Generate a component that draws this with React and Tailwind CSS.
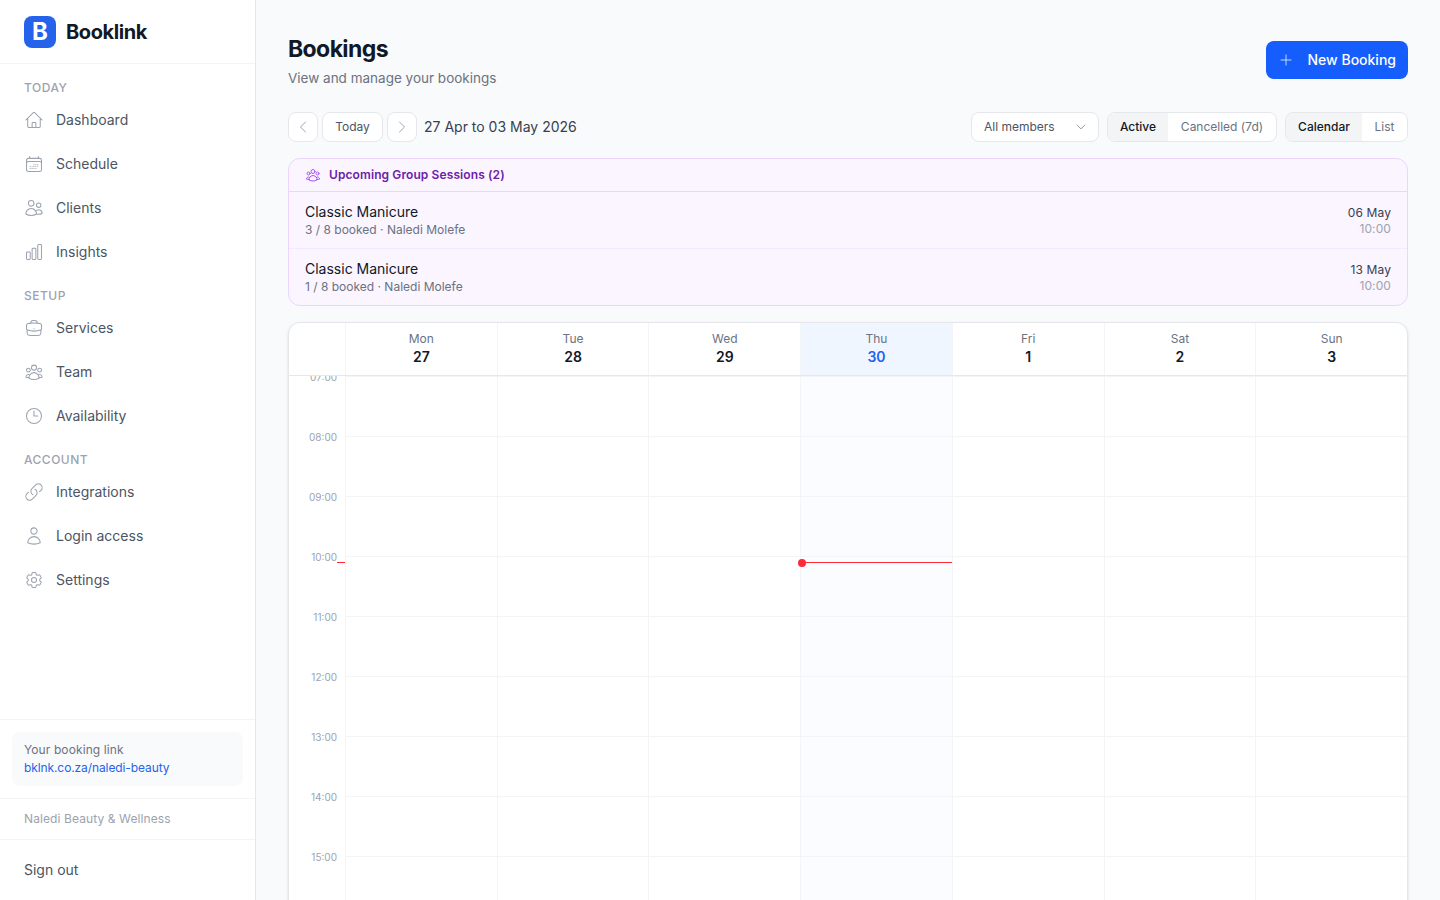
import React from 'react'
import {
  HiOutlineHome, HiOutlineCalendarDays, HiOutlineUsers, HiOutlineChartBar,
  HiOutlineBriefcase, HiOutlineUserGroup, HiOutlineClock, HiOutlineLink,
  HiOutlineUser, HiOutlineCog6Tooth, HiOutlineChevronLeft, HiOutlineChevronRight,
  HiOutlineChevronDown, HiOutlinePlus,
} from 'react-icons/hi2'

const NAV = [
  {
    title: 'Today',
    items: [
      { icon: HiOutlineHome, label: 'Dashboard' },
      { icon: HiOutlineCalendarDays, label: 'Schedule' },
      { icon: HiOutlineUsers, label: 'Clients' },
      { icon: HiOutlineChartBar, label: 'Insights' },
    ],
  },
  {
    title: 'Setup',
    items: [
      { icon: HiOutlineBriefcase, label: 'Services' },
      { icon: HiOutlineUserGroup, label: 'Team' },
      { icon: HiOutlineClock, label: 'Availability' },
    ],
  },
  {
    title: 'Account',
    items: [
      { icon: HiOutlineLink, label: 'Integrations' },
      { icon: HiOutlineUser, label: 'Login access' },
      { icon: HiOutlineCog6Tooth, label: 'Settings' },
    ],
  },
]

const SESSIONS = [
  { name: 'Classic Manicure', meta: '3 / 8 booked · Naledi Molefe', date: '06 May', time: '10:00' },
  { name: 'Classic Manicure', meta: '1 / 8 booked · Naledi Molefe', date: '13 May', time: '10:00' },
]

const DAYS = [
  { name: 'Mon', num: '27' },
  { name: 'Tue', num: '28' },
  { name: 'Wed', num: '29' },
  { name: 'Thu', num: '30', today: true },
  { name: 'Fri', num: '1' },
  { name: 'Sat', num: '2' },
  { name: 'Sun', num: '3' },
]

const HOURS = ['07:00', '08:00', '09:00', '10:00', '11:00', '12:00', '13:00', '14:00', '15:00', '16:00']

function Sidebar() {
  return (
    <aside className="flex h-full w-64 shrink-0 flex-col border-r border-[#e5e7eb] bg-white">
      {/* Logo */}
      <div className="flex h-16 shrink-0 items-center gap-2.5 border-b border-[#f3f4f6] px-6">
        <div className="flex h-8 w-8 items-center justify-center rounded-lg bg-[#2563eb] text-2xl font-bold leading-none text-white">
          B
        </div>
        <span className="text-xl font-bold tracking-[-0.4px] text-[#111827]">Booklink</span>
      </div>

      {/* Nav */}
      <nav className="flex-1 pt-4">
        {NAV.map(section => (
          <div key={section.title} className="mb-3.5">
            <p className="mb-0.5 h-4 px-6 text-xs font-medium uppercase leading-4 tracking-[0.5px] text-[#9ca3af]">
              {section.title}
            </p>
            {section.items.map(({ icon: Icon, label }) => (
              <div key={label} className="flex h-11 items-center gap-3 px-6 text-sm text-[#4b5563]">
                <Icon size={20} strokeWidth={1.25} className="shrink-0 text-[#9ca3af]" />
                <span>{label}</span>
              </div>
            ))}
          </div>
        ))}
      </nav>

      {/* Bottom */}
      <div className="border-t border-[#f3f4f6] p-3">
        <div className="h-[54px] rounded-lg bg-[#f9fafb] px-3 pt-[9px]">
          <p className="text-xs leading-[18px] tracking-[0.1px] text-[#6b7280]">Your booking link</p>
          <p className="text-xs leading-[18px] tracking-[-0.1px] text-[#2563eb]">bklnk.co.za/naledi-beauty</p>
        </div>
      </div>
      <div className="flex h-[41px] items-center border-t border-[#f3f4f6] px-6 text-xs tracking-[0.1px] text-[#9ca3af]">
        Naledi Beauty &amp; Wellness
      </div>
      <div className="flex h-[61px] items-center border-t border-[#f3f4f6] px-6 text-sm text-[#4b5563]">
        Sign out
      </div>
    </aside>
  )
}

function Toolbar() {
  return (
    <div className="mt-6 flex h-[30px] shrink-0 items-center justify-between">
      <div className="flex items-center gap-1">
        <button className="flex h-[30px] w-[30px] items-center justify-center rounded-lg border border-[#e5e7eb] bg-white text-[#9ca3af]">
          <HiOutlineChevronLeft size={16} />
        </button>
        <button className="flex h-[30px] w-[61px] items-center justify-center rounded-lg border border-[#e5e7eb] bg-white text-xs text-[#4b5563]">
          Today
        </button>
        <button className="flex h-[30px] w-[30px] items-center justify-center rounded-lg border border-[#e5e7eb] bg-white text-[#9ca3af]">
          <HiOutlineChevronRight size={16} />
        </button>
        <span className="ml-[3px] text-sm text-[#374151]">27 Apr to 03 May 2026</span>
      </div>
      <div className="flex items-center gap-2">
        <div className="flex h-[30px] w-32 items-center justify-between rounded-lg border border-[#e5e7eb] bg-white pl-3 pr-[11px] text-xs text-[#4b5563]">
          All members
          <HiOutlineChevronDown size={12} className="text-[#6b7280]" />
        </div>
        <div className="flex h-[30px] overflow-hidden rounded-lg border border-[#e5e7eb] bg-white text-xs">
          <span className="flex w-[60px] items-center justify-center bg-[#f3f4f6] font-medium text-[#111827]">Active</span>
          <span className="flex w-[108px] items-center justify-center text-[#6b7280]">Cancelled (7d)</span>
        </div>
        <div className="flex h-[30px] overflow-hidden rounded-lg border border-[#e5e7eb] bg-white text-xs">
          <span className="flex w-[76px] items-center justify-center bg-[#f3f4f6] font-medium text-[#111827]">Calendar</span>
          <span className="flex w-[45px] items-center justify-center text-[#6b7280]">List</span>
        </div>
      </div>
    </div>
  )
}

function GroupSessions() {
  return (
    <div className="mt-4 shrink-0 overflow-hidden rounded-xl border border-[#e9d5ff] bg-[#faf5ff]">
      <div className="flex h-[33px] items-center gap-2 border-b border-[#e9d5ff] px-4 text-xs font-semibold tracking-[0.1px] text-[#6b21a8]">
        <HiOutlineUserGroup size={16} className="text-[#a855f7]" />
        Upcoming Group Sessions (2)
      </div>
      {SESSIONS.map((s, i) => (
        <div
          key={s.date}
          className={`flex items-center justify-between px-4 pt-0.5 ${i > 0 ? 'h-[57px] border-t border-[#f3e8ff]' : 'h-14'}`}
        >
          <div>
            <p className="text-sm leading-[18px] text-[#111827]">{s.name}</p>
            <p className="text-xs leading-[18px] text-[#6b7280]">{s.meta}</p>
          </div>
          <div className="text-right">
            <p className="text-xs leading-[16px] tracking-[0.1px] text-[#374151]">{s.date}</p>
            <p className="text-xs leading-[16px] tracking-[0.1px] text-[#9ca3af]">{s.time}</p>
          </div>
        </div>
      ))}
    </div>
  )
}

function Calendar() {
  return (
    <div className="mt-4 shrink-0 overflow-hidden rounded-xl border border-[#e5e7eb] bg-white shadow-sm">
      {/* Day header */}
      <div className="grid h-[53px] grid-cols-[56px_repeat(7,1fr)] border-b border-[#e5e7eb]">
        <div />
        {DAYS.map(d => (
          <div
            key={d.name}
            className={`flex flex-col items-center justify-center border-l border-[#f3f4f6] ${d.today ? 'bg-[#eff6ff]' : ''}`}
          >
            <span className="text-xs leading-4 text-[#6b7280]">{d.name}</span>
            <span className={`text-sm font-semibold leading-5 ${d.today ? 'text-[#2563eb]' : 'text-[#111827]'}`}>{d.num}</span>
          </div>
        ))}
      </div>

      {/* Time grid */}
      <div className="relative overflow-hidden">
        {HOURS.map(hour => (
          <div key={hour} className="grid h-[60px] grid-cols-[56px_repeat(7,1fr)]">
            <div className="pr-2 pt-px text-right">
              <span className="block -translate-y-1/2 text-[10px] leading-4 text-[#9ca3af]">{hour}</span>
            </div>
            {DAYS.map(d => (
              <div
                key={d.name}
                className={`border-l border-t border-[#f3f4f6] ${d.today ? 'bg-[#eff6ff]/30' : ''}`}
              />
            ))}
          </div>
        ))}

        {/* Now line */}
        <div className="absolute left-[48px] top-[186px] h-px w-2 bg-[#fb2c36]" />
        <div className="absolute left-[512px] top-[186px] h-px w-[151px] bg-[#fb2c36]" />
        <div className="absolute left-[509px] top-[183px] h-2 w-2 rounded-full bg-[#fb2c36]" />
      </div>
    </div>
  )
}

export default function App() {
  return (
    <div className="flex h-screen w-full overflow-hidden bg-[#f9fafb] font-['Inter',sans-serif]">
      <Sidebar />
      <main className="flex min-w-0 flex-1 flex-col overflow-hidden px-8 pt-8">
        <div className="flex shrink-0 items-start justify-between">
          <div>
            <h1 className="text-[23px] font-bold leading-[34px] tracking-[-0.6px] text-[#111827]">Bookings</h1>
            <p className="mt-0.5 text-[13.5px] leading-5 text-[#6b7280]">View and manage your bookings</p>
          </div>
          <button className="mt-[9px] flex h-[38px] items-center gap-3.5 rounded-lg bg-[#155dfc] px-3 text-sm font-medium text-white">
            <HiOutlinePlus size={16} className="text-[#bfdbfe]" />
            New Booking
          </button>
        </div>
        <Toolbar />
        <GroupSessions />
        <Calendar />
      </main>
    </div>
  )
}
